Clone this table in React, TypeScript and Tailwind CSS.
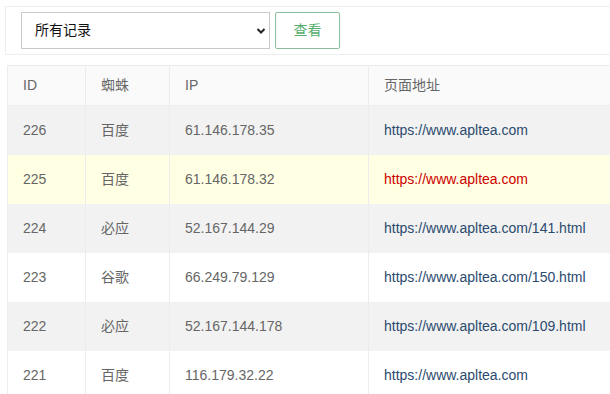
import React from "react";

const rows = [
  { id: "226", spider: "百度", ip: "61.146.178.35", url: "https://www.apltea.com", hl: false },
  { id: "225", spider: "百度", ip: "61.146.178.32", url: "https://www.apltea.com", hl: true },
  { id: "224", spider: "必应", ip: "52.167.144.29", url: "https://www.apltea.com/141.html", hl: false },
  { id: "223", spider: "谷歌", ip: "66.249.79.129", url: "https://www.apltea.com/150.html", hl: false },
  { id: "222", spider: "必应", ip: "52.167.144.178", url: "https://www.apltea.com/109.html", hl: false },
  { id: "221", spider: "百度", ip: "116.179.32.22", url: "https://www.apltea.com", hl: false },
];

export default function App() {
  return (
    <div
      className="w-[610px] h-[394px] overflow-hidden bg-white text-[14px]"
      style={{ fontFamily: '"Liberation Sans", Arial, "Noto Sans CJK SC", sans-serif' }}
    >
      <div className="pl-[5px] pt-[6px]">
        <div className="w-[700px] h-[49px] border border-[#eeeeee] flex items-center pl-[15px] gap-[5px]">
          <div className="relative w-[249px] h-[37px] border border-[#c9c9c9] bg-white flex items-center pl-[13px] text-[#111]">
            <span>所有记录</span>
            <svg className="absolute right-[3px] top-[14px]" width="10" height="8" viewBox="0 0 10 8">
              <path d="M1.5 2 L5 5.5 L8.5 2" fill="none" stroke="#222" strokeWidth="2" />
            </svg>
          </div>
          <div className="w-[65px] h-[37px] border border-[#8cc09b] rounded-[2px] flex items-center justify-center text-[#55ab6c]">
            查看
          </div>
        </div>
      </div>
      <div className="pl-[7px] pt-[10px]">
        <table className="w-[700px] border-collapse text-[#666] table-fixed">
          <colgroup>
            <col className="w-[78px]" />
            <col className="w-[84px]" />
            <col className="w-[199px]" />
            <col />
          </colgroup>
          <thead>
            <tr className="h-[40px] bg-[#fafafa]">
              <th className="border border-[#ececec] px-[15px] text-left font-normal">ID</th>
              <th className="border border-[#ececec] px-[15px] text-left font-normal">蜘蛛</th>
              <th className="border border-[#ececec] px-[15px] text-left font-normal">IP</th>
              <th className="border border-[#ececec] px-[15px] text-left font-normal">页面地址</th>
            </tr>
          </thead>
          <tbody>
            {rows.map((r, i) => (
              <tr
                key={r.id}
                className={
                  "h-[49px] " + (r.hl ? "bg-[#ffffe3]" : i % 2 === 0 ? "bg-[#f2f2f2]" : "bg-white")
                }
              >
                <td className="border-x border-[#ececec] px-[15px]">{r.id}</td>
                <td className="border-x border-[#ececec] px-[15px]">{r.spider}</td>
                <td className="border-x border-[#ececec] px-[15px]">{r.ip}</td>
                <td className={"border-x border-[#ececec] px-[15px] " + (r.hl ? "text-[#cc0000]" : "text-[#2b4a6f]")}>
                  {r.url}
                </td>
              </tr>
            ))}
          </tbody>
        </table>
      </div>
    </div>
  );
}
